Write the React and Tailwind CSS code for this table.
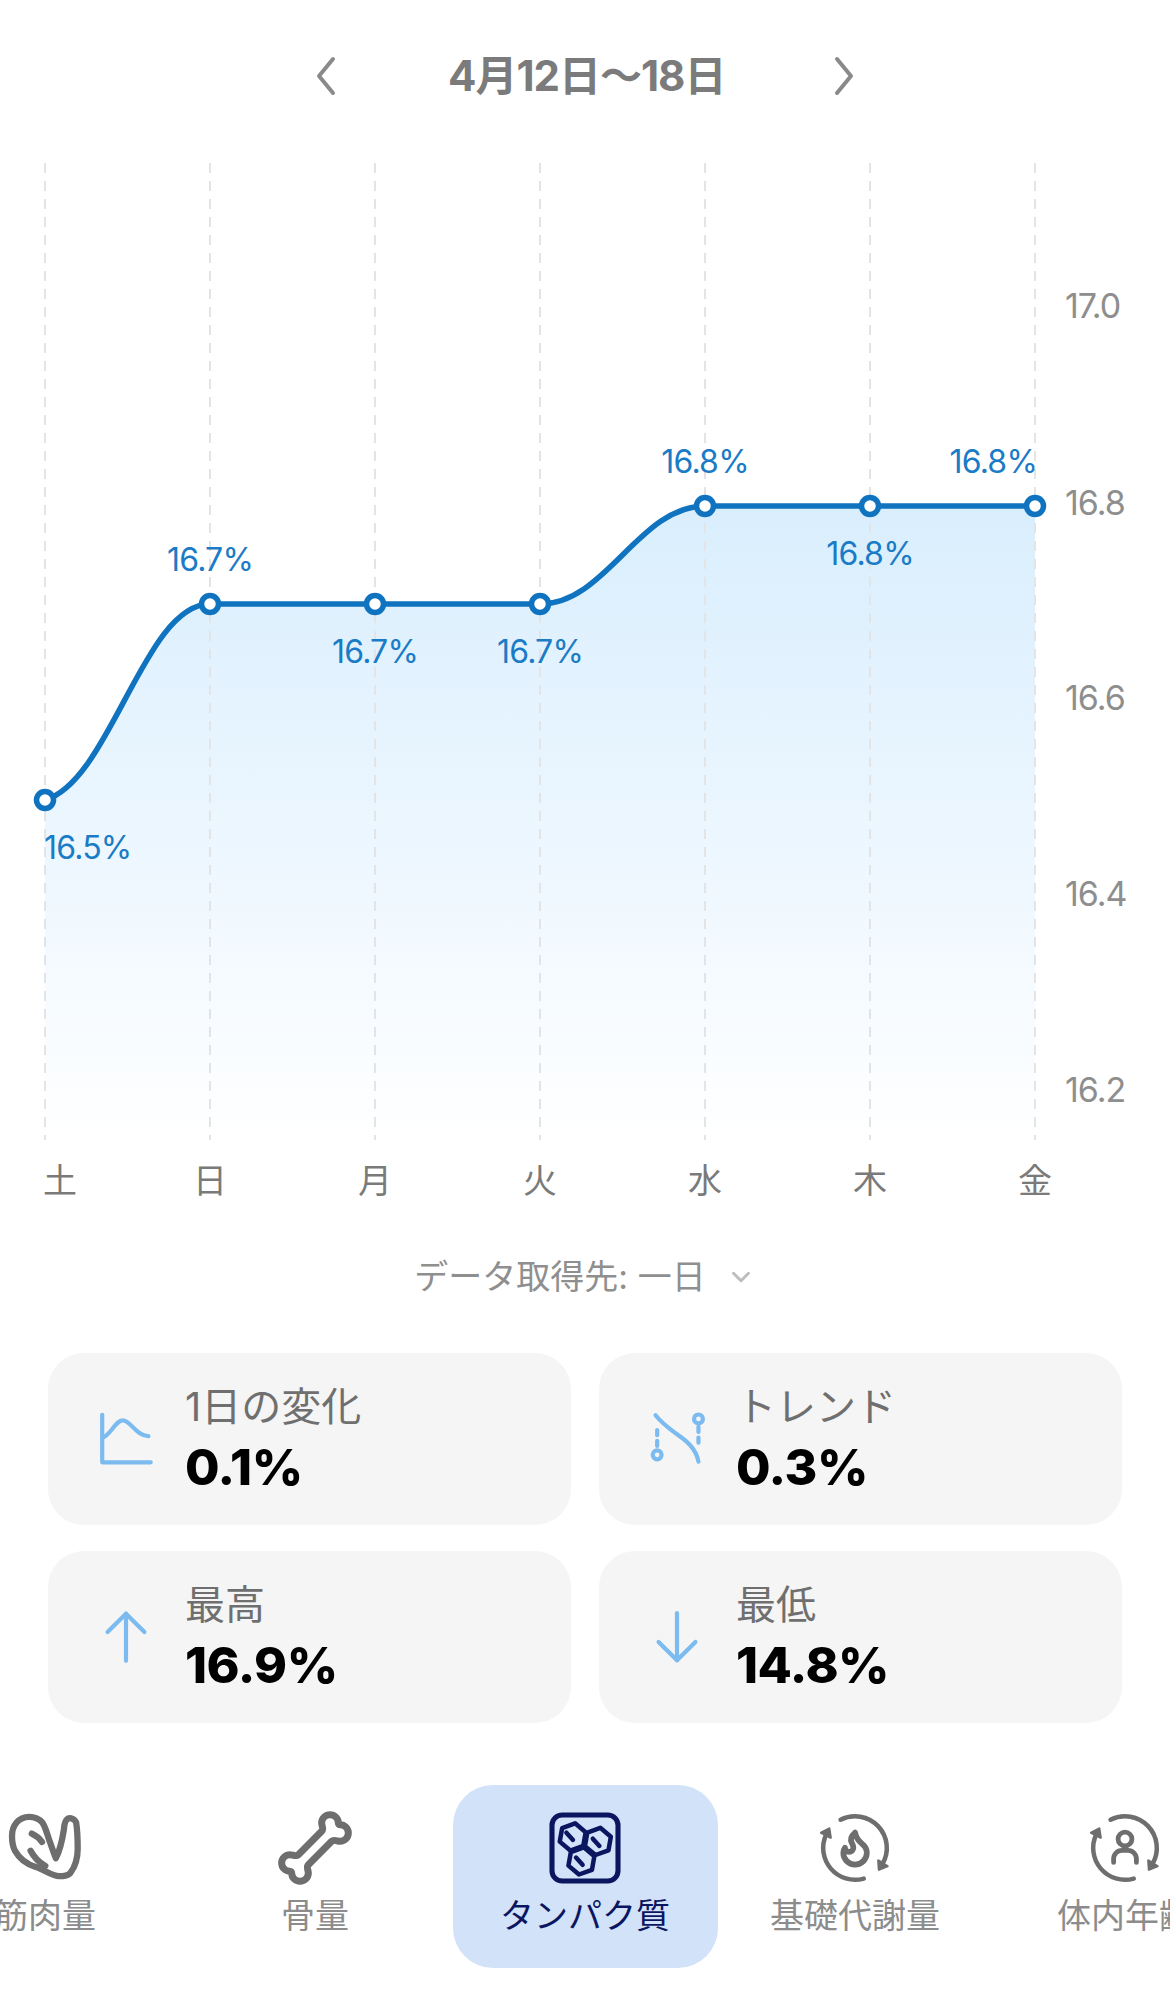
import React from 'react';
import { Bone, ChevronDown } from 'lucide-react';

const days = ['土', '日', '月', '火', '水', '木', '金'];
const values = [16.5, 16.7, 16.7, 16.7, 16.8, 16.8, 16.8];
const labelPos = ['below', 'above', 'below', 'below', 'above', 'below', 'above'];
const ticks = [
  { v: '17.0', y: 305 },
  { v: '16.8', y: 502 },
  { v: '16.6', y: 697 },
  { v: '16.4', y: 893 },
  { v: '16.2', y: 1089 },
];

const xAt = (i) => 45 + i * 165;
const yAt = (v) => 506 + (16.8 - v) * 980;
const FONT = "Inter, 'Noto Sans CJK JP', sans-serif";

// monotone-ish curve, first tangent softened to match the app's look
const buildLine = () => {
  const pts = values.map((v, i) => [xAt(i), yAt(v)]);
  const s = [];
  for (let i = 0; i < pts.length - 1; i++) {
    s.push((pts[i + 1][1] - pts[i][1]) / (pts[i + 1][0] - pts[i][0]));
  }
  const t = pts.map((_, i) => {
    if (i === 0) return s[0] * 0.25;
    if (i === pts.length - 1) return s[s.length - 1] * 0.25;
    const a = s[i - 1];
    const b = s[i];
    if (a * b <= 0) return 0;
    return (Math.sign(a) + Math.sign(b)) * Math.min(Math.abs(a), Math.abs(b), Math.abs((a + b) / 2));
  });
  let d = `M${pts[0][0]} ${pts[0][1]}`;
  for (let i = 0; i < pts.length - 1; i++) {
    const h = (pts[i + 1][0] - pts[i][0]) * 0.4;
    d += ` C${pts[i][0] + h} ${pts[i][1] + h * t[i]} ${pts[i + 1][0] - h} ${pts[i + 1][1] - h * t[i + 1]} ${pts[i + 1][0]} ${pts[i + 1][1]}`;
  }
  return { d, pts };
};

const Chart = () => {
  const { d, pts } = buildLine();
  const fill = `${d} L${pts[6][0]} 1140 L${pts[0][0]} 1140 Z`;
  return (
    <svg className="block" width="1170" height="1090" viewBox="0 130 1170 1090" fontFamily={FONT}>
      <defs>
        <linearGradient id="area" x1="0" y1="506" x2="0" y2="1140" gradientUnits="userSpaceOnUse">
          <stop offset="0" stopColor="#d9eefd" />
          <stop offset="0.55" stopColor="#edf7ff" />
          <stop offset="1" stopColor="#ffffff" />
        </linearGradient>
      </defs>
      <path d={fill} fill="url(#area)" />
      {days.map((_, i) => (
        <line key={i} x1={xAt(i)} x2={xAt(i)} y1="163" y2="1140" stroke="#e2e4e6" strokeWidth="2" strokeDasharray="10 8" />
      ))}
      <path d={d} fill="none" stroke="#0f73bf" strokeWidth="5.5" />
      {pts.map(([x, y], i) => (
        <circle key={i} cx={x} cy={y} r="8.5" fill="#ffffff" stroke="#0f73bf" strokeWidth="5.5" />
      ))}
      {pts.map(([x, y], i) => (
        <text
          key={i}
          x={i === 0 ? 44 : i === 6 ? 1037 : x}
          y={labelPos[i] === 'above' ? y - 33 : y + 59}
          textAnchor={i === 0 ? 'start' : i === 6 ? 'end' : 'middle'}
          fontSize="32"
          fill="#1a7bc6"
          letterSpacing="-0.8"
        >
          {values[i].toFixed(1)}%
        </text>
      ))}
      {ticks.map((tk) => (
        <text key={tk.v} x="1065" y={tk.y} dominantBaseline="central" fontSize="34" fill="#8e8e8e" letterSpacing="-1">
          {tk.v}
        </text>
      ))}
      {days.map((day, i) => (
        <text
          key={day}
          x={i === 0 ? 43 : xAt(i)}
          y="1180"
          dominantBaseline="central"
          textAnchor={i === 0 ? 'start' : 'middle'}
          fontSize="34"
          fill="#7a7a7a"
        >
          {day}
        </text>
      ))}
    </svg>
  );
};

const BLUE = '#7bbbef';

const ChangeIcon = () => (
  <svg width="56" height="56" viewBox="0 0 24 24" fill="none" stroke={BLUE} strokeWidth="1.8" strokeLinecap="round" strokeLinejoin="round">
    <path d="M1.8 1.6V22H22.6" />
    <path d="M1.8 11.4C5 11 7.4 4 10.6 4C14 4 16.2 10.6 21.6 10.8" />
  </svg>
);

const TrendIcon = () => (
  <svg width="56" height="56" viewBox="0 0 24 24" fill="none" stroke={BLUE} strokeWidth="1.8" strokeLinecap="round" strokeLinejoin="round">
    <path d="M2.8 1.8C5 4.6 8 7 11.2 9.4S20 15 21.2 21.7" />
    <circle cx="3.5" cy="18.8" r="1.9" />
    <path d="M3.5 8.2V15.4" strokeDasharray="2.2 2.4" />
    <circle cx="21.2" cy="3.4" r="1.9" />
    <path d="M21.2 6.8V13.6" strokeDasharray="2.2 2.4" />
  </svg>
);

const UpIcon = () => (
  <svg width="56" height="56" viewBox="0 0 24 24" fill="none" stroke={BLUE} strokeWidth="1.8" strokeLinecap="round" strokeLinejoin="round">
    <path d="M12 2V22.2" />
    <path d="M4.1 9.9L12 2L19.9 9.9" />
  </svg>
);

const DownIcon = () => (
  <svg width="56" height="56" viewBox="0 0 24 24" fill="none" stroke={BLUE} strokeWidth="1.8" strokeLinecap="round" strokeLinejoin="round">
    <path d="M12 1.8V22" />
    <path d="M4.1 14.1L12 22L19.9 14.1" />
  </svg>
);

const StatCard = ({ icon, label, value }) => (
  <div className="flex items-center h-[172px] rounded-[36px] bg-[#f5f5f5] pl-[50px]">
    <div className="w-[56px] h-[56px] flex items-center justify-center shrink-0">{icon}</div>
    <div className="ml-[31px] flex flex-col">
      <span className="text-[40px] leading-[44px] text-[#6f6f6f]">{label}</span>
      <span className="mt-[11px] text-[50px] leading-[54px] font-extrabold text-black tracking-[-0.5px]">{value}</span>
    </div>
  </div>
);

const hex = (cx, cy, r, rot) =>
  Array.from({ length: 6 }, (_, i) => {
    const a = ((rot + 60 * i) * Math.PI) / 180;
    return `${(cx + r * Math.cos(a)).toFixed(2)},${(cy + r * Math.sin(a)).toFixed(2)}`;
  }).join(' ');

const ProteinIcon = () => (
  <svg width="74" height="72" viewBox="0 0 24 24" fill="none" stroke="#0b1660" strokeWidth="1.5" strokeLinecap="round" strokeLinejoin="round">
    <rect x="1" y="1" width="22" height="22" rx="3.4" strokeWidth="1.7" />
    <polygon points={hex(7.9, 8.3, 4.6, -20)} />
    <polygon points={hex(16.3, 9.8, 4.6, -20)} />
    <polygon points={hex(10.8, 16.3, 4.6, -20)} />
    <path d="M5.8 6.9L8 9.3" />
    <path d="M14.6 8.9L16.8 11.3" />
    <path d="M9 15.2L11.2 17.6" />
  </svg>
);

const MuscleIcon = () => (
  <svg width="74" height="72" viewBox="0 0 24 24" fill="none" stroke="#6e6e6e" strokeWidth="2.1" strokeLinecap="round" strokeLinejoin="round">
    <path d="M6.7 1.6C3.2 1.6 1 4.6 1 7.9C1 10.2 1.4 11.8 2 12.9C3.6 15.8 6 17.4 8.9 18.3C12 19.4 14.5 21.4 16.7 21.4C18.4 21.4 19.8 21 20.4 20.4C22.2 18 22.9 15.5 22.9 12.3C22.9 9 22.7 5.6 22.4 3.6C22 2.3 20.5 1.8 19.6 2.2C18.7 2.8 18.4 4.2 18.3 5.8C17.8 9 17 12.8 15.6 15.4C14.8 13.4 14 11 13.3 9C12.6 7 12 4.6 11.1 3.5C10 2.2 8.3 1.6 6.7 1.6Z" />
    <path d="M7.2 12.9C8.5 15.4 10.4 17 12.1 18" />
    <path d="M7.6 7.2C8.9 7.8 10.2 8.8 11 10" />
  </svg>
);

const pt = (a, r = 10.6) => {
  const rad = (a * Math.PI) / 180;
  return [12 + r * Math.cos(rad), 12 + r * Math.sin(rad)];
};
const arc = (a0, a1) => {
  const [x0, y0] = pt(a0);
  const [x1, y1] = pt(a1);
  return `M${x0} ${y0}A10.6 10.6 0 0 1 ${x1} ${y1}`;
};
const head = (a) => {
  const rad = (a * Math.PI) / 180;
  const [px, py] = pt(a);
  const dx = -Math.sin(rad);
  const dy = Math.cos(rad);
  const nx = Math.cos(rad);
  const ny = Math.sin(rad);
  const tip = [px + dx * 1.9, py + dy * 1.9];
  const b1 = [px - dx * 0.6 + nx * 1.8, py - dy * 0.6 + ny * 1.8];
  const b2 = [px - dx * 0.6 - nx * 1.8, py - dy * 0.6 - ny * 1.8];
  return [tip, b1, b2].map((p) => p.join(',')).join(' ');
};

const CycleIcon = ({ children }) => (
  <svg width="74" height="72" viewBox="0 0 24 24" fill="none" stroke="#6e6e6e" strokeWidth="1.5" strokeLinecap="round" strokeLinejoin="round">
    <path d={arc(-117, 30)} />
    <path d={arc(74, 205)} />
    <polygon points={head(32)} fill="#6e6e6e" strokeWidth="0.8" />
    <polygon points={head(207)} fill="#6e6e6e" strokeWidth="0.8" />
    {children}
  </svg>
);

const navItems = [
  { label: '筋肉量', icon: <MuscleIcon /> },
  { label: '骨量', icon: <Bone size={80} color="#6e6e6e" strokeWidth={2.1} /> },
  { label: 'タンパク質', icon: <ProteinIcon />, active: true },
  {
    label: '基礎代謝量',
    icon: (
      <CycleIcon>
        <g transform="translate(5.3 5.2) scale(0.56)">
          <path
            strokeWidth="3.4"
            d="M8.5 14.5A2.5 2.5 0 0 0 11 12c0-1.38-.5-2-1-3-1.072-2.143-.224-4.054 2-6 .5 2.5 2 4.9 4 6.5 2 1.6 3 3.5 3 5.5a7 7 0 1 1-14 0c0-1.153.433-2.294 1-3a2.5 2.5 0 0 0 2.5 2.5z"
          />
        </g>
      </CycleIcon>
    ),
  },
  {
    label: '体内年齢',
    icon: (
      <CycleIcon>
        <circle cx="12" cy="9" r="2.3" strokeWidth="1.6" />
        <path d="M8.2 16.8V15.6a2.8 2.8 0 0 1 2.8-2.8h2a2.8 2.8 0 0 1 2.8 2.8v1.2" strokeWidth="1.6" />
      </CycleIcon>
    ),
  },
];

const App = () => {
  return (
    <div className="w-[1170px] min-h-[1994px] bg-white overflow-hidden font-['Inter','Noto_Sans_CJK_JP',sans-serif]">
      {/* Week selector */}
      <div className="h-[130px] pt-[56px] flex items-start justify-center gap-[112px]">
        <svg width="20" height="40" viewBox="0 0 20 40" fill="none" stroke="#8a8a8a" strokeWidth="4" strokeLinecap="round" strokeLinejoin="round">
          <path d="M17 3L3 20L17 37" />
        </svg>
        <span className="w-[274px] text-center text-[42px] leading-[40px] font-bold text-[#7b7b7b] tracking-[-1px] whitespace-nowrap">
          4月12日〜18日
        </span>
        <svg width="20" height="40" viewBox="0 0 20 40" fill="none" stroke="#8a8a8a" strokeWidth="4" strokeLinecap="round" strokeLinejoin="round">
          <path d="M3 3L17 20L3 37" />
        </svg>
      </div>

      <Chart />

      {/* Data source */}
      <div className="mt-[37px] h-[40px] flex items-center justify-center gap-[20px]">
        <span className="text-[34px] leading-[40px] text-[#8f8f8f]">データ取得先: 一日</span>
        <ChevronDown size={30} color="#bdbdbd" strokeWidth={2.4} />
      </div>

      {/* Stats */}
      <div className="mt-[56px] px-12 grid grid-cols-2 gap-x-[28px] gap-y-[26px]">
        <StatCard icon={<ChangeIcon />} label="1日の変化" value="0.1%" />
        <StatCard icon={<TrendIcon />} label="トレンド" value="0.3%" />
        <StatCard icon={<UpIcon />} label="最高" value="16.9%" />
        <StatCard icon={<DownIcon />} label="最低" value="14.8%" />
      </div>

      {/* Bottom tabs */}
      <div className="mt-[62px] flex justify-center overflow-hidden">
        {navItems.map((item) => (
          <div key={item.label} className="w-[270px] shrink-0 flex justify-center">
            <div
              className={`w-[265px] h-[183px] rounded-[40px] flex flex-col items-center pt-[27px] ${
                item.active ? 'bg-[#d2e2f9]' : 'bg-white'
              }`}
            >
              <div className="h-[72px] flex items-center justify-center">{item.icon}</div>
              <span
                className={`mt-[12px] text-[34px] leading-[40px] whitespace-nowrap ${
                  item.active ? 'text-[#0b1660]' : 'text-[#8c8c8c]'
                }`}
              >
                {item.label}
              </span>
            </div>
          </div>
        ))}
      </div>
    </div>
  );
};

export default App;
